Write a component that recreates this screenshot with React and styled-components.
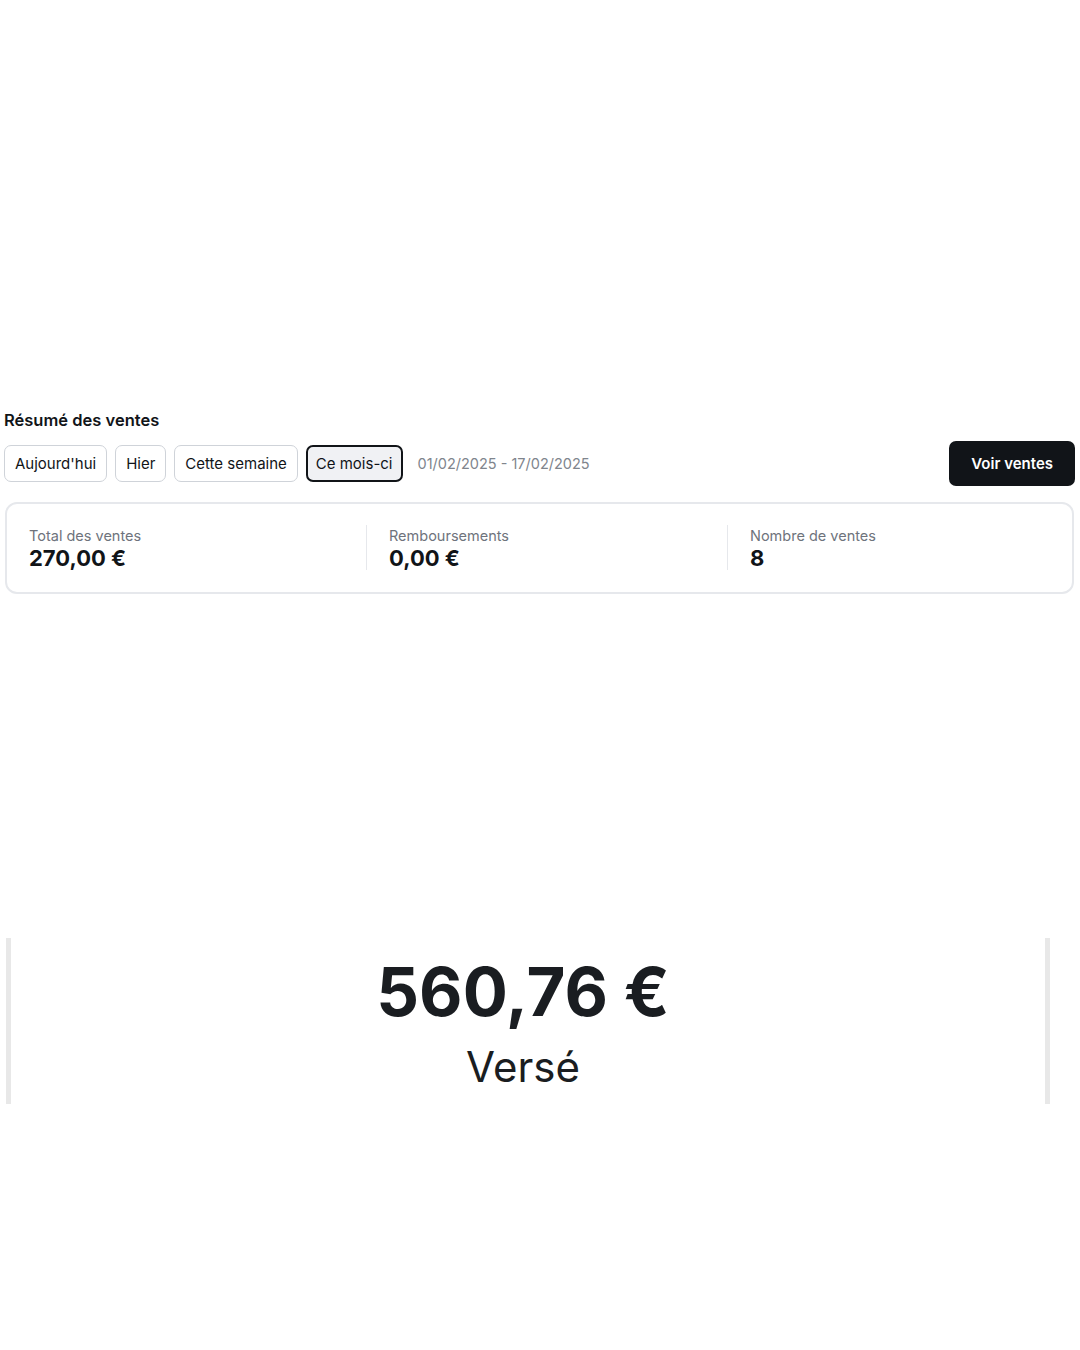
import styled, { createGlobalStyle } from "styled-components";

const GlobalStyle = createGlobalStyle`
    * {
        box-sizing: border-box;
    }

    body {
        margin: 0;
        background: #ffffff;
        font-family: Inter, "Noto Sans", sans-serif;
        color: #111418;
    }
`;

const Page = styled.div`
    width: 1080px;
    min-height: 1350px;
    padding-top: 408px;
`;

const Summary = styled.section`
    padding: 0 5px 0 4px;
`;

const Title = styled.h2`
    margin: 0;
    font-size: 16.5px;
    line-height: 24px;
    font-weight: 600;
    color: #111418;
`;

const Toolbar = styled.div`
    display: flex;
    align-items: center;
    height: 45px;
    margin-top: 9px;
`;

const Filters = styled.div`
    display: flex;
    align-items: center;
    gap: 8px;
`;

const FilterButton = styled.button`
    height: 37px;
    padding: 0 ${({ $active }) => ($active ? "8px" : "10px")};
    border: ${({ $active }) => ($active ? "2px solid #111418" : "1px solid #cfd3d9")};
    border-radius: 7px;
    background: ${({ $active }) => ($active ? "#f0f1f4" : "#ffffff")};
    color: #111418;
    font-family: Inter, sans-serif;
    font-size: 15px;
    cursor: pointer;
`;

const DateRange = styled.span`
    margin-left: 15px;
    font-size: 14.5px;
    color: #80858d;
`;

const PrimaryButton = styled.button`
    margin-left: auto;
    height: 45px;
    padding: 0 22px;
    border: none;
    border-radius: 7px;
    background: #111418;
    color: #ffffff;
    font-family: Inter, sans-serif;
    font-size: 15px;
    font-weight: 600;
    cursor: pointer;
`;

const StatsCard = styled.div`
    display: grid;
    grid-template-columns: 359px 361px 1fr;
    margin: 16px 1px 0;
    padding: 21px 0 22px;
    border: 2px solid #e6e8ec;
    border-radius: 12px;
`;

const Stat = styled.div`
    padding-left: 22px;
    border-left: ${({ $first }) => ($first ? "none" : "1px solid #e6e8ec")};
`;

const StatLabel = styled.div`
    font-size: 14.5px;
    line-height: 21px;
    color: #6e737c;
`;

const StatValue = styled.div`
    font-size: 22px;
    line-height: 24px;
    font-weight: 700;
    color: #111418;
`;

const Payout = styled.section`
    display: flex;
    flex-direction: column;
    align-items: center;
    width: 1044px;
    margin: 344px 0 0 6px;
    padding: 13px 10px 12px 0;
    border-left: 5px solid #e8e8e8;
    border-right: 5px solid #e8e8e8;
`;

const Amount = styled.div`
    font-size: 67px;
    line-height: 82px;
    font-weight: 700;
    color: #1a1d21;
`;

const AmountLabel = styled.div`
    margin-top: 9px;
    font-size: 42px;
    line-height: 50px;
    color: #1a1d21;
`;

const filters = ["Aujourd'hui", "Hier", "Cette semaine", "Ce mois-ci"];

const stats = [
    { label: "Total des ventes", value: "270,00 €" },
    { label: "Remboursements", value: "0,00 €" },
    { label: "Nombre de ventes", value: "8" },
];

export default function App() {
    return (
        <>
            <GlobalStyle />
            <Page>
                <Summary>
                    <Title>Résumé des ventes</Title>
                    <Toolbar>
                        <Filters>
                            {filters.map((f) => (
                                <FilterButton key={f} $active={f === "Ce mois-ci"}>
                                    {f}
                                </FilterButton>
                            ))}
                        </Filters>
                        <DateRange>01/02/2025 - 17/02/2025</DateRange>
                        <PrimaryButton>Voir ventes</PrimaryButton>
                    </Toolbar>
                    <StatsCard>
                        {stats.map((s, i) => (
                            <Stat key={s.label} $first={i === 0}>
                                <StatLabel>{s.label}</StatLabel>
                                <StatValue>{s.value}</StatValue>
                            </Stat>
                        ))}
                    </StatsCard>
                </Summary>
                <Payout>
                    <Amount>560,76 €</Amount>
                    <AmountLabel>Versé</AmountLabel>
                </Payout>
            </Page>
        </>
    );
}
